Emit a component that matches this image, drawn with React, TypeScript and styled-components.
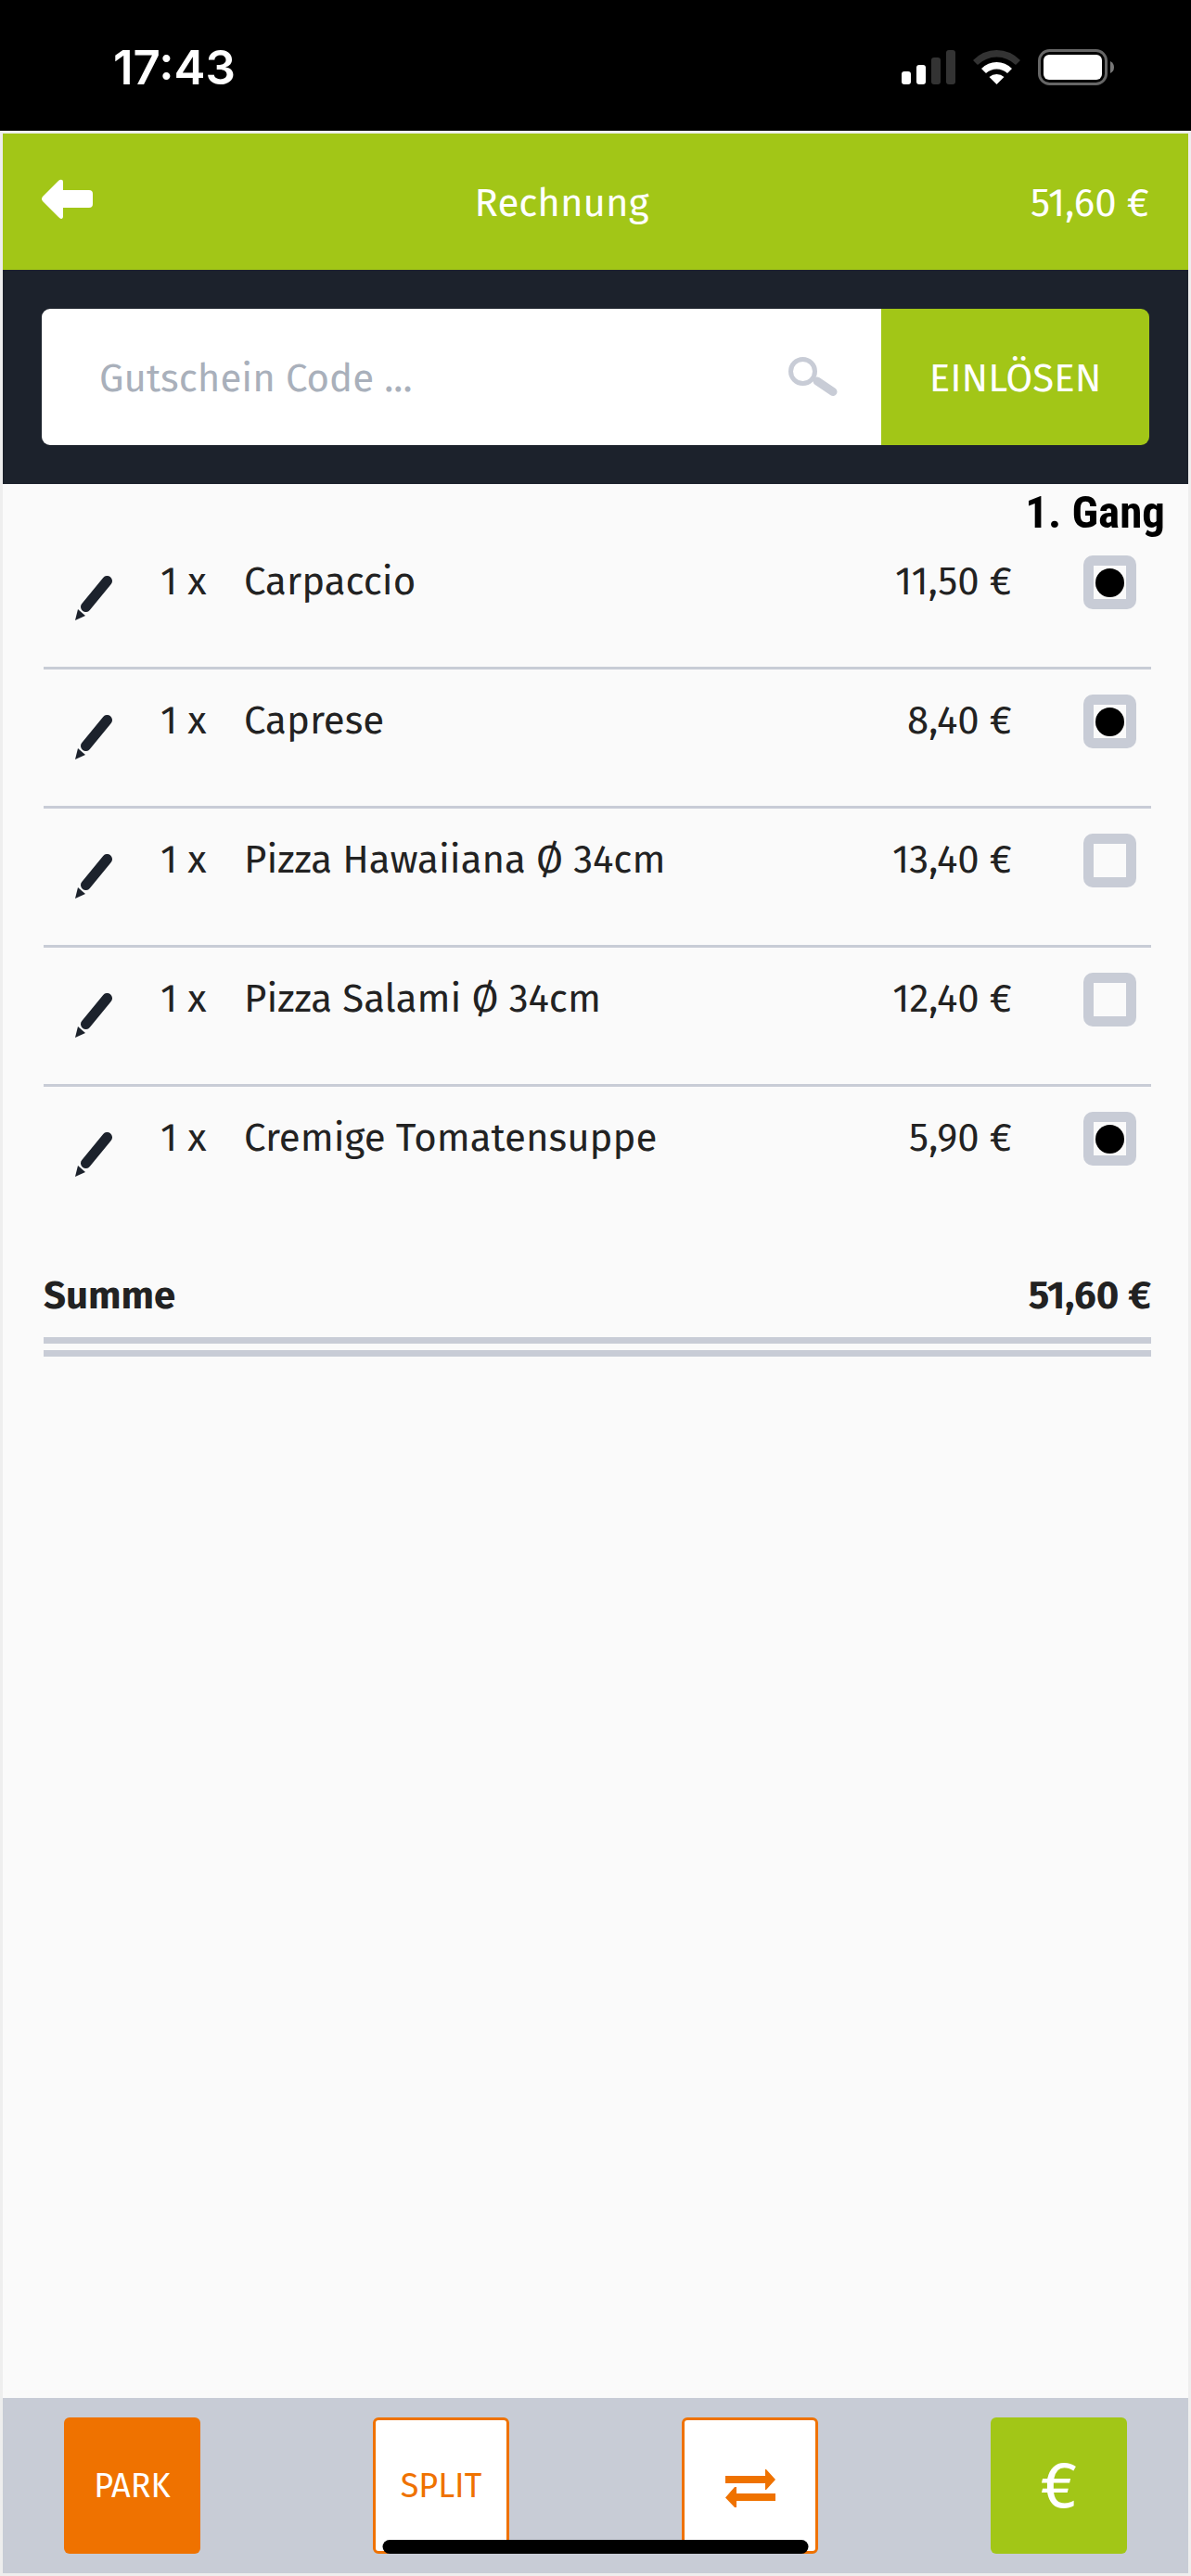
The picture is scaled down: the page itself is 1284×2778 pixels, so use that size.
import React, { useState } from "react";
import styled, { createGlobalStyle, css } from "styled-components";

const color = {
  green: "#a2c617",
  orange: "#ef7200",
  dark: "#1c222c",
  line: "#c8ccd6",
  paper: "#fafafa",
  frame: "#eeeeee",
  text: "#222222",
  hint: "#a9b0bb",
};

const GlobalStyle = createGlobalStyle`
  *, *::before, *::after { box-sizing: border-box; }
  body {
    margin: 0;
    background: ${color.frame};
    color: ${color.text};
    font-family: "Fira Sans", "Noto Sans", sans-serif;
    font-size: 42px;
    line-height: 60px;
  }
  button, input { font: inherit; }
  button { border: 0; padding: 0; cursor: pointer; }
`;

const Screen = styled.div`
  display: flex;
  flex-direction: column;
  min-height: 100vh;
`;

const StatusBar = styled.div`
  display: flex;
  justify-content: space-between;
  align-items: center;
  height: 141px;
  padding: 4px 82px 0 122px;
  background: #000;
  color: #fff;
`;

const Clock = styled.time`
  font-family: Inter, sans-serif;
  font-size: 51px;
  font-weight: 600;
`;

const StatusIcons = styled.div`
  display: flex;
  align-items: center;
  gap: 19px;

  svg { display: block; }
`;

const Page = styled.div`
  display: flex;
  flex: 1;
  flex-direction: column;
  margin: 3px;
  background: ${color.paper};
`;

const Header = styled.header`
  display: flex;
  justify-content: space-between;
  align-items: center;
  height: 147px;
  padding: 2px 42px 0;
  background: ${color.green};
  color: #fff;
`;

const Title = styled.h1`
  margin: 0;
  font-size: inherit;
  font-weight: 400;
`;

const IconButton = styled.button`
  justify-self: start;
  background: none;
  color: inherit;

  svg { display: block; }
`;

const VoucherBar = styled.form`
  display: flex;
  padding: 42px;
  background: ${color.dark};
`;

const VoucherField = styled.label`
  display: flex;
  flex: 1;
  align-items: center;
  min-width: 0;
  height: 147px;
  padding: 0 47px 0 62px;
  border-radius: 9px 0 0 9px;
  background: #fff;
`;

const VoucherInput = styled.input`
  flex: 1;
  min-width: 0;
  border: 0;
  padding: 2px 0 0;
  outline: 0;
  background: none;
  color: ${color.text};

  &::placeholder { color: ${color.hint}; opacity: 1; }
`;

const RedeemButton = styled.button`
  width: 289px;
  padding-top: 2px;
  border-radius: 0 9px 9px 0;
  background: ${color.green};
  color: #fff;
`;

const Bill = styled.main`
  flex: 1;
`;

const Course = styled.h2`
  margin: 12px 25px 0;
  color: #000;
  font-family: "Roboto Condensed", "Liberation Sans Narrow", Roboto, sans-serif;
  font-size: 49px;
  font-weight: 700;
  line-height: 38px;
  text-align: right;
`;

const Items = styled.ul`
  margin: 0 40px 0 44px;
  padding: 0;
  list-style: none;
`;

const Item = styled.li`
  display: grid;
  grid-template-columns: 126px 90px 1fr auto 57px;
  align-items: start;
  height: 150px;
  padding: 25px 16px 0 0;

  & + & { box-shadow: 0 -3px 0 ${color.line}; }
`;

const EditButton = styled(IconButton)`
  padding: 24px 34px;
  color: ${color.dark};
`;

const Price = styled.span`
  margin-right: 77px;
`;

const Check = styled.input`
  display: grid;
  place-items: center;
  width: 57px;
  height: 58px;
  margin: 2px 0 0;
  border-radius: 10px;
  appearance: none;
  background: linear-gradient(${color.paper}, ${color.paper}) center / 35px 36px no-repeat ${color.line};

  &:checked::after {
    content: "";
    width: 31px;
    height: 31px;
    border-radius: 50%;
    background: #000;
  }
`;

const Sum = styled.div`
  display: flex;
  justify-content: space-between;
  margin: 45px 40px 0 44px;
  padding: 0 0 15px;
  border-bottom: 21px double ${color.line};
  font-weight: 700;
`;

const Actions = styled.footer`
  position: relative;
  display: flex;
  justify-content: space-between;
  padding: 21px 66px;
  background: ${color.line};
`;

const outlined = css`
  border: 3px solid ${color.orange};
  background: #fff;
  color: ${color.orange};
`;

const Action = styled.button<{ $tone: "orange" | "outline" | "green"; $large?: boolean }>`
  display: grid;
  place-items: center;
  width: 147px;
  height: 147px;
  border-radius: 6px;
  background: ${(p) => (p.$tone === "green" ? color.green : color.orange)};
  color: #fff;
  font-size: ${(p) => (p.$large ? 70 : 36)}px;
  ${(p) => p.$tone === "outline" && outlined}
`;

const HomeIndicator = styled.div`
  position: absolute;
  bottom: 21px;
  left: 50%;
  width: 459px;
  height: 15px;
  border-radius: 8px;
  background: #000;
  transform: translateX(-50%);
`;

const Signal = () => (
  <svg width="58" height="38" viewBox="0 0 58 38" aria-hidden="true">
    <rect x="0" y="23" width="10" height="14" rx="3" fill="#fff" />
    <rect x="16" y="16" width="10" height="21" rx="3" fill="#fff" />
    <rect x="32" y="8" width="10" height="29" rx="3" fill="#333" />
    <rect x="48" y="0" width="10" height="37" rx="3" fill="#333" />
  </svg>
);

const Wifi = () => (
  <svg width="51" height="38" viewBox="0 0 51 38" aria-hidden="true">
    <path d="M0 11 Q11 0 25.500 0 Q40 0 51 11 L46 16 Q37 7.500 25.500 7.500 Q14 7.500 5 16 Z" fill="#333" />
    <path d="M9 20 Q16 13 25.500 13 Q35 13 42 20 L37 25 Q32 20.500 25.500 20.500 Q19 20.500 14 25 Z" fill="#fff" />
    <path d="M17.500 29 Q21 26 25.500 26 Q30 26 33.500 29 L25.500 37 Z" fill="#fff" />
  </svg>
);

const Battery = () => (
  <svg width="83" height="40" viewBox="0 0 83 40" aria-hidden="true">
    <rect x="1.500" y="1.500" width="72" height="36" rx="11" fill="none" stroke="#666" strokeWidth="3" />
    <rect x="6" y="6" width="63" height="27" rx="6" fill="#fff" />
    <path d="M78 13 Q82 15 82 19.500 Q82 24 78 26 Z" fill="#777" />
  </svg>
);

const BackArrow = () => (
  <svg width="55" height="51" viewBox="0 0 55 51" aria-hidden="true">
    <path
      d="M1 19 L18 2 Q20 0 22 1 Q23 1 23 4 V12 H51 Q55 12 55 16 V27 Q55 31 51 31 H23 V40 Q23 43 21 43 Q20 43 18 41 L1 24 Q-1 21.500 1 19 Z"
      fill="currentColor"
    />
  </svg>
);

const Magnifier = () => (
  <svg width="53" height="43" viewBox="0 0 53 43" aria-hidden="true">
    <circle cx="15.500" cy="15.500" r="13" fill="none" stroke={color.line} strokeWidth="5" />
    <path d="M25 23 L31 25.500 L48 38" fill="none" stroke={color.line} strokeWidth="2" />
    <path d="M31 26 L48 37.500" stroke={color.line} strokeWidth="9" strokeLinecap="round" />
  </svg>
);

const Pencil = () => (
  <svg width="40" height="48" viewBox="0 0 40 48" aria-hidden="true">
    <path d="M34.500 5.500 L11.500 33.500" stroke="currentColor" strokeWidth="11" strokeLinecap="round" />
    <path d="M3 36 L11 43 L0 48 Z" fill="currentColor" />
  </svg>
);

const Swap = () => (
  <svg width="54" height="48" viewBox="0 -6 54 48" aria-hidden="true">
    <path d="M0 7 H43 V0 H44 L54 11 L44 22 H43 V15 H0 Z" fill="currentColor" />
    <path d="M54 26 H12 V19 H10 L0 30.500 L10 41 H12 V34 H54 Z" fill="currentColor" />
  </svg>
);

const order = [
  { name: "Carpaccio", price: "11,50 €", course: true },
  { name: "Caprese", price: "8,40 €", course: true },
  { name: "Pizza Hawaiiana Ø 34cm", price: "13,40 €", course: false },
  { name: "Pizza Salami Ø 34cm", price: "12,40 €", course: false },
  { name: "Cremige Tomatensuppe", price: "5,90 €", course: true },
];

export default function App() {
  const [code, setCode] = useState("");

  return (
    <Screen>
      <GlobalStyle />
      <StatusBar>
        <Clock>17:43</Clock>
        <StatusIcons>
          <Signal />
          <Wifi />
          <Battery />
        </StatusIcons>
      </StatusBar>
      <Page>
        <Header>
          <IconButton type="button" aria-label="Zurück">
            <BackArrow />
          </IconButton>
          <Title>Rechnung</Title>
          <span>51,60 €</span>
        </Header>
        <VoucherBar onSubmit={(e) => e.preventDefault()}>
          <VoucherField>
            <VoucherInput
              aria-label="Gutschein Code"
              placeholder="Gutschein Code ..."
              value={code}
              onChange={(e) => setCode(e.target.value)}
            />
            <Magnifier />
          </VoucherField>
          <RedeemButton type="submit">EINLÖSEN</RedeemButton>
        </VoucherBar>
        <Bill>
          <Course>1. Gang</Course>
          <Items>
            {order.map((item) => (
              <Item key={item.name}>
                <EditButton type="button" aria-label={`${item.name} bearbeiten`}>
                  <Pencil />
                </EditButton>
                <span>1 x</span>
                <span>{item.name}</span>
                <Price>{item.price}</Price>
                <Check type="checkbox" aria-label={item.name} defaultChecked={item.course} />
              </Item>
            ))}
          </Items>
          <Sum>
            <span>Summe</span>
            <span>51,60 €</span>
          </Sum>
        </Bill>
        <Actions>
          <Action type="button" $tone="orange">PARK</Action>
          <Action type="button" $tone="outline">SPLIT</Action>
          <Action type="button" $tone="outline" aria-label="Tauschen">
            <Swap />
          </Action>
          <Action type="button" $tone="green" $large>€</Action>
          <HomeIndicator />
        </Actions>
      </Page>
    </Screen>
  );
}
